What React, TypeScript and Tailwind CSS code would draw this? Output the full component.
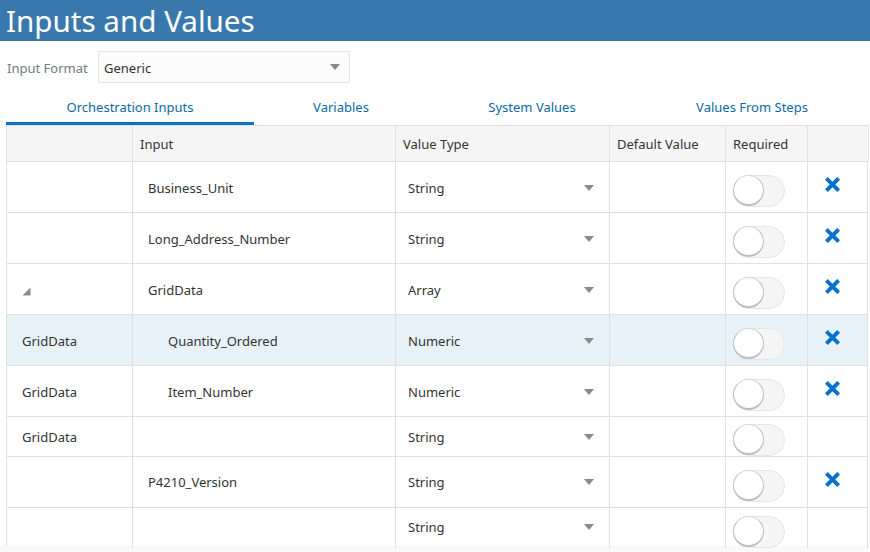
const F = "font-['Noto_Sans','Open_Sans',sans-serif]";

function Caret({ className = "" }: { className?: string }) {
  return (
    <svg width="10" height="6" viewBox="0 0 10 6" className={className}>
      <path d="M0 0H10L5 6Z" fill="#8a8a8a" />
    </svg>
  );
}

function Cross() {
  return (
    <svg width="15" height="15" viewBox="0 0 15 15">
      <path d="M2.8 2.8L12.2 12.2M12.2 2.8L2.8 12.2" stroke="#0572ce" strokeWidth="4" strokeLinecap="square" />
    </svg>
  );
}

function Toggle() {
  return (
    <div className="relative h-[32px] w-[52px] rounded-full border border-[#e6e6e6] bg-[#f5f5f5]">
      <div className="absolute left-[-1px] top-[-1px] h-[31px] w-[31px] rounded-full border border-b-2 border-[#bdbdbd] border-t-[#d4d4d4] bg-white" />
    </div>
  );
}

type Row = {
  h: string;
  group?: string;
  tri?: boolean;
  input?: string;
  indent?: boolean;
  type: string;
  x: boolean;
  hi?: boolean;
  top: string;
  text: string;
};

const rows: Row[] = [
  { h: "h-[51px]", input: "Business_Unit", type: "String", x: true, top: "pt-[13px]", text: "pt-[4px]" },
  { h: "h-[51px]", input: "Long_Address_Number", type: "String", x: true, top: "pt-[13px]", text: "pt-[4px]" },
  { h: "h-[51px]", tri: true, input: "GridData", type: "Array", x: true, top: "pt-[13px]", text: "pt-[4px]" },
  { h: "h-[51px]", group: "GridData", input: "Quantity_Ordered", indent: true, type: "Numeric", x: true, hi: true, top: "pt-[13px]", text: "pt-[4px]" },
  { h: "h-[51px]", group: "GridData", input: "Item_Number", indent: true, type: "Numeric", x: true, top: "pt-[13px]", text: "pt-[4px]" },
  { h: "h-[40px]", group: "GridData", type: "String", x: false, top: "pt-[7px]", text: "pt-[2px]" },
  { h: "h-[51px]", input: "P4210_Version", type: "String", x: true, top: "pt-[13px]", text: "pt-[2px]" },
  { h: "h-[38px]", type: "String", x: false, top: "pt-[8px]", text: "pt-0" },
];

const cols = "grid grid-cols-[126px_263px_214px_116px_82px_60px]";
const cell = "border-r border-[#e0e0e0] flex items-center";

export default function App() {
  return (
    <div className={`h-[552px] w-[870px] overflow-hidden bg-white text-[13px] text-[#333] ${F}`}>
      <div className="flex h-[41px] items-center bg-[#3878ad] pl-[6px] text-[29.6px] leading-[36px] text-white">
        Inputs and Values
      </div>

      <div className="flex h-[42px] items-end pl-[7px]">
        <span className="w-[91px] pb-[5px] text-[#6e7a84]">Input Format</span>
        <div className="flex h-[32px] w-[252px] items-center justify-between rounded-[2px] border border-[#e3e3e3] bg-[#fcfcfc] pl-[5px] pr-[9px]">
          <span className="pt-[3px]">Generic</span>
          <Caret />
        </div>
      </div>

      <div className="ml-[6px] mt-[8px] grid h-[34px] w-[862px] grid-cols-[248px_174px_208px_232px] text-[#0a6aa8]">
        <div className="flex items-center justify-center border-b-[3px] border-[#0572ce] pt-[2px]">Orchestration Inputs</div>
        <div className="flex items-center justify-center pb-[1px]">Variables</div>
        <div className="flex items-center justify-center pb-[1px]">System Values</div>
        <div className="flex items-center justify-center pb-[1px]">Values From Steps</div>
      </div>

      <div className="ml-[6px] w-[862px] border-l border-[#e0e0e0]">
        <div className={`${cols} h-[37px] w-[862px] border-y border-r border-[#e0e0e0] bg-[#f5f5f5]`}>
          <div className={cell} />
          <div className={`${cell} pl-[7px] pt-[2px]`}>Input</div>
          <div className={`${cell} pl-[7px] pt-[2px]`}>Value Type</div>
          <div className={`${cell} pl-[7px] pt-[2px]`}>Default Value</div>
          <div className={`${cell} pl-[7px] pt-[2px]`}>Required</div>
          <div className="flex items-center" />
        </div>

        {rows.map((r, i) => (
          <div
            key={i}
            className={`${cols} ${r.h} ${i < rows.length - 1 ? "border-b" : ""} border-[#e0e0e0] ${r.hi ? "bg-[#e7f2f8]" : "bg-white"}`}
          >
            <div className={`${cell} pl-[15px] ${r.text}`}>
              {r.group}
              {r.tri && (
                <svg width="9" height="9" viewBox="0 0 9 9">
                  <path d="M8.5 0.5V8.5H0.5Z" fill="#8a8a8a" />
                </svg>
              )}
            </div>
            <div className={`${cell} ${r.text} ${r.indent ? "pl-[35px]" : "pl-[15px]"}`}>{r.input}</div>
            <div className={`${cell} justify-between pl-[12px] pr-[15px] ${r.text}`}>
              <span>{r.type}</span>
              <Caret className="mb-[2px]" />
            </div>
            <div className={cell} />
            <div className={`${cell} items-start pl-[7px] ${r.top}`}>
              <Toggle />
            </div>
            <div className={`${cell} pb-[6px] pl-[17px]`}>{r.x && <Cross />}</div>
          </div>
        ))}
      </div>
      <div className="h-[6px] bg-[#f9f9f9]" />
    </div>
  );
}
